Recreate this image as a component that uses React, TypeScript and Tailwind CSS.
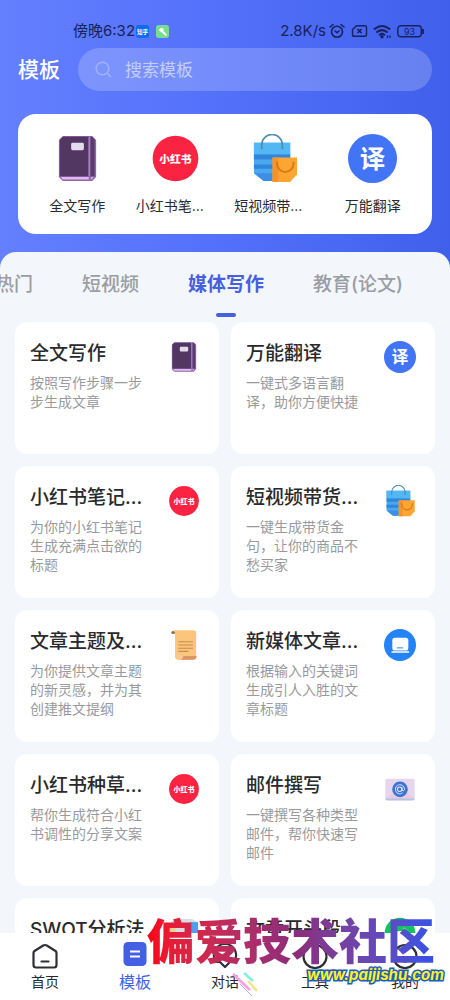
import React from "react";

type IconName = "book" | "red" | "bags" | "translate" | "scroll" | "laptop" | "mail" | "swot" | "green";

function Art({ name, className }: { name: IconName; className: string }) {
  switch (name) {
    case "book":
      return (
        <svg viewBox="0 0 50 50" className={className} aria-hidden="true">
          <path d="M10 2h30l4 4v38l-4 4H10l-4-4V6z" fill="#8e68aa" />
          <path d="M10 2.800h26V43H7V6z" fill="#523763" />
          <path d="M38 2.800h2l2.500 3V43H38z" fill="#5a3b6c" />
          <path d="M36.500 2.800H38V43h-1.500z" fill="#a77fc0" />
          <path d="M8 43.800h28.500v2.700H10z" fill="#e2b8f2" />
          <path d="M38.500 43.800h3l-2 2.700h-1z" fill="#d3a6e6" />
          <rect x="18.500" y="9" width="13" height="7.500" rx="1.500" fill="#e4dcec" />
        </svg>
      );
    case "red":
      return (
        <svg viewBox="0 0 50 50" className={className}>
          <circle cx="25" cy="25" r="23.300" fill="#fa2442" />
          <text x="25" y="29.600" textAnchor="middle" fontSize="11" fontWeight="900" fill="#fff">小红书</text>
        </svg>
      );
    case "bags":
      return (
        <svg viewBox="0 0 50 50" className={className} aria-hidden="true">
          <path d="M4 9h37v39H14L4 40z" fill="#4aa9ee" />
          <path d="M4 9h37v12H4z" fill="#53b7f4" />
          <path d="M4 21h37v5H4zM4 31h20v4.500H4z" fill="#2f86dc" />
          <path d="M4 40h19v8h-9z" fill="#3c8fe8" />
          <path d="M12 15v-4a10.500 10.500 0 0 1 21 0v4" fill="none" stroke="#4e8dac" strokeWidth="1.700" strokeLinecap="round" />
          <path d="M23 24h25v17l-7 8H23z" fill="#fca531" />
          <path d="M23 24h6v25h-6z" fill="#f5942a" />
          <path d="M27.500 29c0 13 17 13 17 0" fill="none" stroke="#d97919" strokeWidth="2" strokeLinecap="round" />
        </svg>
      );
    case "translate":
      return (
        <svg viewBox="0 0 50 50" className={className}>
          <circle cx="25" cy="25" r="25" fill="#4274f6" />
          <text x="25" y="34.500" textAnchor="middle" fontSize="26" fontWeight="700" fill="#fff">译</text>
        </svg>
      );
    case "scroll":
      return (
        <svg viewBox="0 0 50 50" className={className} aria-hidden="true">
          <path d="M8 2h32q4 0 4 4v36q0 6-5 6H17q-6 0-6-6V8z" fill="#fbc67c" />
          <path d="M7 3q4 0 4 4l-4 1q-4-2 0-5z" fill="#8d674b" />
          <path d="M24 42h21q-1 6-6 6H17q6-1 7-6z" fill="#dd9565" />
          <path d="M11 40q0 8 6 8 6 0 7-6z" fill="#f8ca8d" />
          <path d="M16 20h23M16 25h23M16 30h23M16 35h16" stroke="#c68b51" strokeWidth="1.700" />
        </svg>
      );
    case "laptop":
      return (
        <svg viewBox="0 0 50 50" className={className} aria-hidden="true">
          <circle cx="25" cy="25" r="25" fill="#2583fa" />
          <rect x="13" y="13.500" width="25" height="20" rx="4" fill="#fff" />
          <rect x="11.500" y="34.700" width="28" height="2.300" rx="1" fill="#fff" />
          <path d="M20 29.500h10" stroke="#2583fa" strokeWidth="1.500" />
        </svg>
      );
    case "mail":
      return (
        <svg viewBox="0 0 50 50" className={className} aria-hidden="true">
          <rect x="2" y="9" width="46" height="33" rx="3" fill="#e6d7ee" />
          <path d="M2 40l17-14h12l17 14q-1 2-3 2H5q-2 0-3-2z" fill="#e9cddd" />
          <path d="M2 40h46q-1 3-3 3H5q-2 0-3-3z" fill="#b4c2ee" />
          <circle cx="25" cy="25.500" r="12.200" fill="#3f75d0" />
          <circle cx="24.500" cy="25.500" r="3.500" fill="none" stroke="#dce8ff" strokeWidth="1.600" />
          <path d="M28 22v5q3 2 4-1c0-10-14-10-14-1 0 8 7 9 11 6" fill="none" stroke="#dce8ff" strokeWidth="1.500" />
        </svg>
      );
    case "swot":
      return (
        <svg viewBox="0 0 50 50" className={className} aria-hidden="true">
          <rect x="3" y="3" width="44" height="44" rx="12" fill="#d9dce5" />
          <path d="M34 8h13v28H34z" fill="#4f9fe8" />
          <path d="M3 16h9v20H3z" fill="#ecd38c" />
        </svg>
      );
    case "green":
      return (
        <svg viewBox="0 0 50 50" className={className} aria-hidden="true">
          <circle cx="25" cy="25" r="24" fill="#16c160" />
          <path d="M15 20l5-3M30 17l5 3" stroke="#7be0a6" strokeWidth="2" />
          <ellipse cx="25" cy="31" rx="13" ry="9" fill="#fff" />
        </svg>
      );
  }
}

const shortcuts: { icon: IconName; label: string; clipped?: boolean }[] = [
  { icon: "book", label: "全文写作" },
  { icon: "red", label: "小红书笔...", clipped: true },
  { icon: "bags", label: "短视频带...", clipped: true },
  { icon: "translate", label: "万能翻译" },
];

const cards: { icon: IconName; title: string; desc?: string }[] = [
  { icon: "book", title: "全文写作", desc: "按照写作步骤一步步生成文章" },
  { icon: "translate", title: "万能翻译", desc: "一键式多语言翻译，助你方便快捷" },
  { icon: "red", title: "小红书笔记...", desc: "为你的小红书笔记生成充满点击欲的标题" },
  { icon: "bags", title: "短视频带货...", desc: "一键生成带货金句，让你的商品不愁买家" },
  { icon: "scroll", title: "文章主题及...", desc: "为你提供文章主题的新灵感，并为其创建推文提纲" },
  { icon: "laptop", title: "新媒体文章...", desc: "根据输入的关键词生成引人入胜的文章标题" },
  { icon: "red", title: "小红书种草...", desc: "帮你生成符合小红书调性的分享文案" },
  { icon: "mail", title: "邮件撰写", desc: "一键撰写各种类型邮件，帮你快速写邮件" },
  { icon: "swot", title: "SWOT分析法" },
  { icon: "green", title: "文章开头段" },
];

const tabs = ["热门", "短视频", "媒体写作", "教育(论文)"];

function StatusBar() {
  return (
    <div className="flex h-12 items-end justify-between pr-[25px] pb-2 pl-[73px] text-[#17225c]">
      <div className="flex h-[18px] items-center text-[15px] leading-[18px]">
        <span>傍晚6:32</span>
        <svg viewBox="0 0 14 14" className="ml-px size-[13px]">
          <rect width="14" height="14" rx="3" fill="#0c6df0" />
          <text x="7" y="9.300" textAnchor="middle" fontSize="6" fontWeight="700" fill="#fff">知乎</text>
        </svg>
        <svg viewBox="0 0 14 14" className="ml-[7px] size-[13px]" aria-hidden="true">
          <rect width="14" height="14" rx="3" fill="#78dc92" />
          <path d="M6 6l4.500 4.500" stroke="#fff" strokeWidth="2" strokeLinecap="round" />
          <path d="M3 5.500L5.500 3l2.700 1v3L6 8z" fill="#fff" />
        </svg>
      </div>
      <div className="flex h-[18px] items-center">
        <span className="text-[15px] leading-[18px]">2.8K/s</span>
        <svg viewBox="0 0 16 16" className="ml-[3px] size-4" fill="none" stroke="currentColor" strokeWidth="1.600" strokeLinecap="round" aria-hidden="true">
          <circle cx="8" cy="8.700" r="5.500" />
          <path d="M1 4l3-2.500M15 4l-3-2.500M6 8l2 1.700L10 8" />
        </svg>
        <svg viewBox="0 0 17 14" className="ml-[6px] h-[14px] w-[17px]" fill="none" stroke="currentColor" strokeWidth="1.400" strokeLinejoin="round" aria-hidden="true">
          <path d="M5.500 1.700H14q1.500 0 1.500 1.500v7.600q0 1.500-1.500 1.500H3q-1.500 0-1.500-1.500V5.500z" />
          <path d="M6.500 5l4 4M10.500 5l-4 4" strokeWidth="1.700" />
        </svg>
        <svg viewBox="0 0 19 15" className="ml-[5px] h-[15px] w-[19px]" fill="none" stroke="currentColor" strokeWidth="2" strokeLinecap="round" aria-hidden="true">
          <path d="M1.500 5q7.500-6 15 0M4 8q5-3.800 10 0M6.700 10.700q2.300-1.700 4.600 0" />
          <circle cx="9" cy="12.800" r=".7" fill="currentColor" />
          <path d="M14.500 12v1.500M17 12v1.500" strokeWidth="1.300" />
        </svg>
        <svg viewBox="0 0 28 13" className="ml-[5px] h-[13px] w-7">
          <rect x=".8" y=".8" width="23.500" height="11" rx="3" fill="none" stroke="currentColor" strokeWidth="1.400" />
          <path d="M26 4v5" stroke="currentColor" strokeWidth="1.800" />
          <text x="12.500" y="9.600" textAnchor="middle" fontSize="9" fill="currentColor">93</text>
        </svg>
      </div>
    </div>
  );
}

function NavIcon({ index }: { index: number }) {
  if (index === 1) {
    return (
      <svg viewBox="0 0 28 28" className="size-7" aria-hidden="true">
        <rect x="2.500" y="1" width="23" height="24" rx="4.500" fill="#435fe4" />
        <path d="M9 10.500h10M9 15.500h10" stroke="#fff" strokeWidth="2" />
      </svg>
    );
  }
  return (
    <svg viewBox="0 0 28 28" className="size-7" fill="none" stroke="#2f3033" strokeWidth="2.200" strokeLinecap="round" strokeLinejoin="round" aria-hidden="true">
      {index === 0 && <path d="M12.200 4.500L3.500 10q-1 .7-1 2v12q0 2.500 2.500 2.500h18q2.500 0 2.500-2.500V12q0-1.300-1-2l-8.700-5.500q-1.800-1-3.600 0zM10.500 20.500h7" />}
      {index === 2 && <path d="M14 3a11 11 0 0 0-8.500 18H9l5 5 5-5h3.500A11 11 0 0 0 14 3z" />}
      {index > 2 && <circle cx="14" cy="15.500" r="11.500" />}
      {index === 4 && <path d="M9 18q5 5 10 0" />}
    </svg>
  );
}

export default function App() {
  return (
    <div
      lang="zh-CN"
      className="relative flex h-screen flex-col overflow-hidden bg-gradient-to-r from-[#6480ff] via-[#5270fa] to-[#4060ec] font-['Inter','Noto_Sans_CJK_SC',sans-serif] text-[#292a2d]"
    >
      <header className="shrink-0">
        <StatusBar />
        <div className="flex items-center gap-[18px] px-[18px]">
          <h1 className="text-[21px] leading-[43px] font-medium text-white">模板</h1>
          <label className="flex h-[43px] min-w-0 flex-1 items-center gap-[13px] rounded-full bg-white/20 px-[17px]">
            <svg viewBox="0 0 17 17" className="size-[17px] shrink-0" fill="none" stroke="#9fb1ff" strokeWidth="1.600" strokeLinecap="round" aria-hidden="true">
              <circle cx="7.500" cy="7.500" r="6.300" />
              <path d="M12 12l3.500 3.500" />
            </svg>
            <input
              type="search"
              aria-label="搜索模板"
              placeholder="搜索模板"
              className="min-w-0 flex-1 bg-transparent text-[17px] leading-6 text-white outline-none placeholder:text-[#c4ceff]"
            />
          </label>
        </div>
        <div className="mx-[18px] mt-[23px] grid h-[120px] grid-cols-4 rounded-[18px] bg-white px-[10px]">
          {shortcuts.map((s) => (
            <a key={s.label} href="#" className="flex flex-col items-center pt-5">
              <Art name={s.icon} className="size-[49px]" />
              <span className={s.clipped ? "mt-3 pr-3 text-[14px] leading-[22px] whitespace-nowrap" : "mt-3 text-[14px] leading-[22px] whitespace-nowrap"}>
                {s.label}
              </span>
            </a>
          ))}
        </div>
      </header>

      <main className="mt-[18px] flex min-h-0 flex-1 flex-col overflow-hidden rounded-t-[16px] bg-[#f3f6fb]">
        <div role="tablist" className="-ml-[5px] flex h-[70px] shrink-0 gap-[49px] overflow-hidden">
          {tabs.map((t, i) => (
            <button
              key={t}
              role="tab"
              aria-selected={i === 2}
              className={
                i === 2
                  ? "flex shrink-0 flex-col items-center pt-5 text-[19px] leading-[26px] font-bold text-[#4660df]"
                  : "flex shrink-0 flex-col items-center pt-5 text-[19px] leading-[26px] font-medium text-[#9a9da3]"
              }
            >
              {t}
              {i === 2 && <span className="mt-[15px] h-1 w-5 rounded-full bg-[#4660df]" />}
            </button>
          ))}
        </div>
        <div className="grid min-h-0 flex-1 auto-rows-[132px] grid-cols-2 gap-3 overflow-y-auto px-[15px] pb-3 [scrollbar-width:none]">
          {cards.map((c) => (
            <a key={c.title} href="#" className="flex items-start gap-[23px] rounded-[12px] bg-white pt-[19px] pr-[19px] pl-[15px]">
              <div className="min-w-0 flex-1">
                <h2 className="text-[19px] leading-[26px] font-medium whitespace-nowrap">{c.title}</h2>
                {c.desc && <p className="mt-1.5 text-[14px] leading-[19px] text-[#999a9e]">{c.desc}</p>}
              </div>
              <Art name={c.icon} className="size-8 shrink-0" />
            </a>
          ))}
        </div>
      </main>

      <nav className="grid h-[67px] shrink-0 grid-cols-5 bg-white">
        {["首页", "模板", "对话", "工具", "我的"].map((n, i) => (
          <a key={n} href="#" className="flex flex-col items-center pt-2">
            <NavIcon index={i} />
            <span className={i === 1 ? "mt-[2px] text-[16px] leading-[22px] text-[#435fe4]" : "mt-[2px] text-[14px] leading-[22px]"}>{n}</span>
          </a>
        ))}
      </nav>

      <svg viewBox="0 0 28 26" className="pointer-events-none absolute bottom-[3px] left-[231px] h-[26px] w-7" fill="none" strokeWidth="2.500" aria-hidden="true">
        <path d="M2 3l17 16" stroke="#f5a0e6" />
        <path d="M13 2l9 8" stroke="#7ff0e4" />
        <path d="M17 10l9 10" stroke="#f3e58c" />
        <path d="M9 13l12 12" stroke="#c9a4f4" strokeWidth="1" />
      </svg>
      <div className="pointer-events-none absolute right-[6px] bottom-4 flex flex-col items-end">
        <div className="bg-gradient-to-r from-[#fa0010] via-[#8c2b7c] to-[#2453f0] bg-clip-text pr-[9px] text-[48px] leading-[52px] font-black text-transparent">
          偏爱技术社区
        </div>
        <div className="-mt-[2px] text-[15px] leading-[18px] font-bold text-[#fff02a] italic [-webkit-text-stroke:3px_#1c5cbe] [paint-order:stroke_fill]">
          www.paijishu.com
        </div>
      </div>
    </div>
  );
}
